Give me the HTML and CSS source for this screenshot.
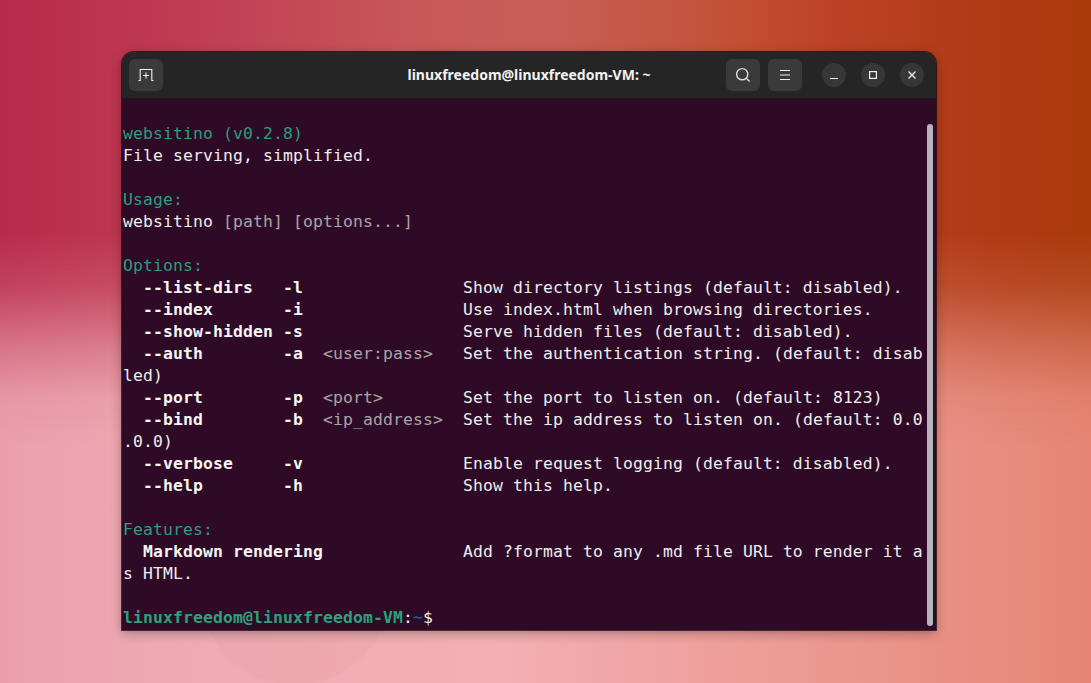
FILE: index.html
```html
<!DOCTYPE html>
<html lang="en">
<head>
<meta charset="utf-8">
<title>linuxfreedom@linuxfreedom-VM: ~</title>
<link rel="stylesheet" href="styles.css">
</head>
<body>
<main class="window">
  <header class="titlebar">
    <div class="bar-start">
      <button class="tool-btn" aria-label="New tab">
        <svg width="16" height="14" viewBox="0 0 16 14" fill="none" stroke="#f2f2f2" stroke-width="1.1"><path d="M0.5 12.5H2.2V1.5H13.8V12.5H15.5"/><path d="M8 4.6V10.4M5.1 7.5H10.9"/></svg>
      </button>
    </div>
    <h1 class="title">linuxfreedom@linuxfreedom-VM: ~</h1>
    <div class="bar-end">
      <div class="tools">
        <button class="tool-btn" aria-label="Search">
          <svg width="16" height="16" viewBox="0 0 16 16" fill="none" stroke="#dcdcdc" stroke-width="1.4"><circle cx="7.2" cy="7.2" r="5.6"/><path d="M11.3 11.3L14.6 14.6"/></svg>
        </button>
        <button class="tool-btn" aria-label="Menu">
          <svg width="12" height="12" viewBox="0 0 12 12" fill="none" stroke="#f0f0f0" stroke-width="1.1"><path d="M1 1.5H11M1 6H11M1 10.5H11"/></svg>
        </button>
      </div>
      <div class="controls">
        <button class="win-btn" aria-label="Minimize"><svg width="10" height="10" viewBox="0 0 10 10" fill="none" stroke="#f0f0f0" stroke-width="1.2"><path d="M1 8.5H9"/></svg></button>
        <button class="win-btn" aria-label="Maximize"><svg width="10" height="10" viewBox="0 0 10 10" fill="none" stroke="#f0f0f0" stroke-width="1.2"><rect x="1.6" y="1.6" width="6.8" height="6.8"/></svg></button>
        <button class="win-btn" aria-label="Close"><svg width="10" height="10" viewBox="0 0 10 10" fill="none" stroke="#f0f0f0" stroke-width="1.3"><path d="M1.5 1.5L8.5 8.5M8.5 1.5L1.5 8.5"/></svg></button>
      </div>
    </div>
  </header>
  <section class="terminal">
<pre class="output"><span class="green">websitino (v0.2.8)</span>
File serving, simplified.

<span class="green">Usage:</span>
websitino <span class="gray">[path] [options...]</span>

<span class="green">Options:</span>
  <b>--list-dirs   -l</b>                Show directory listings (default: disabled).
  <b>--index       -i</b>                Use index.html when browsing directories.
  <b>--show-hidden -s</b>                Serve hidden files (default: disabled).
  <b>--auth        -a</b>  <span class="gray">&lt;user:pass&gt;</span>   Set the authentication string. (default: disab
led)
  <b>--port        -p</b>  <span class="gray">&lt;port&gt;</span>        Set the port to listen on. (default: 8123)
  <b>--bind        -b</b>  <span class="gray">&lt;ip_address&gt;</span>  Set the ip address to listen on. (default: 0.0
.0.0)
  <b>--verbose     -v</b>                Enable request logging (default: disabled).
  <b>--help        -h</b>                Show this help.

<span class="green">Features:</span>
  <b>Markdown rendering</b>              Add ?format to any .md file URL to render it a
s HTML.

<b class="green">linuxfreedom@linuxfreedom-VM</b>:<b class="blue">~</b>$</pre>
    <div class="scrollbar"></div>
  </section>
</main>
</body>
</html>
```
FILE: styles.css
```css
* { box-sizing: border-box; }
html, body { margin: 0; height: 100%; }
body {
  position: relative;
  width: 1091px;
  height: 683px;
  overflow: hidden;
  padding: 52px 155px 0 122px;
  background:
    radial-gradient(circle 96px at 295px 590px, rgba(228,150,155,.18) 98%, rgba(228,150,155,0) 100%),
    linear-gradient(90deg, #eb9fae 0%, #eeaab3 15%, #f3b0b3 45%, #ee9c98 70%, #e58674 100%);
  font-family: "Liberation Sans", sans-serif;
}
body::before {
  content: "";
  position: absolute;
  inset: 0;
  background: linear-gradient(90deg, #b82a4a 0%, #bf3c52 17%, #c9565a 37%, #c85e58 50%, #c45238 66%, #bc4228 76%, #ae3a12 92%, #aa3a0a 100%);
  -webkit-mask-image: linear-gradient(180deg, #000 0%, #000 34%, rgba(0,0,0,.8) 42%, rgba(0,0,0,.36) 51%, rgba(0,0,0,.08) 58%, rgba(0,0,0,0) 65%);
  mask-image: linear-gradient(180deg, #000 0%, #000 34%, rgba(0,0,0,.8) 42%, rgba(0,0,0,.36) 51%, rgba(0,0,0,.08) 58%, rgba(0,0,0,0) 65%);
}
.window {
  position: relative;
  width: 814px;
  height: 578px;
  display: flex;
  flex-direction: column;
  border-radius: 12px 12px 0 0;
  overflow: hidden;
  box-shadow: 0 0 0 1px rgba(20,10,15,.75), 0 3px 12px rgba(0,0,0,.32);
}
.titlebar {
  flex: 0 0 47px;
  display: grid;
  grid-template-columns: 1fr auto 1fr;
  align-items: center;
  padding: 0 7px 1px;
  background: #252525;
  border-bottom: 1px solid #1b1b1b;
}
.bar-start { display: flex; }
.bar-end { display: flex; align-items: center; justify-content: flex-end; gap: 20px; padding-right: 5px; }
.title {
  margin: 0;
  font: 700 14px "Noto Sans", sans-serif;
  color: #f2f2f2;
  white-space: nowrap;
}
.tools { display: flex; gap: 8px; }
.tool-btn {
  width: 34px;
  height: 32px;
  display: flex;
  align-items: center;
  justify-content: center;
  padding: 0;
  border: 0;
  border-radius: 6px;
  background: #3a3a3a;
}
.controls { display: flex; gap: 15px; }
.win-btn {
  width: 24px;
  height: 24px;
  display: flex;
  align-items: center;
  justify-content: center;
  padding: 0;
  border: 0;
  border-radius: 50%;
  background: #373737;
}
.terminal {
  flex: 1;
  display: flex;
  min-height: 0;
  padding: 24px 3px 4px 1px;
  background: #2f0a26;
}
.output {
  flex: 1;
  margin: 0;
  font: 400 16.4px/22px "DejaVu Sans Mono", monospace;
  letter-spacing: 0.13px;
  color: #eeeeec;
  white-space: pre;
  overflow: hidden;
}
.output b { font-weight: 700; color: #f6f6f4; }
.output .green { color: #2a9f78; }
.output b.green { color: #2aa37a; }
.output .gray { color: #a9a4a6; }
.output .blue { color: #1b5a8f; }
.scrollbar {
  flex: 0 0 6px;
  margin-top: 1px;
  border-radius: 3px;
  background: #b9b2bb;
}
```
